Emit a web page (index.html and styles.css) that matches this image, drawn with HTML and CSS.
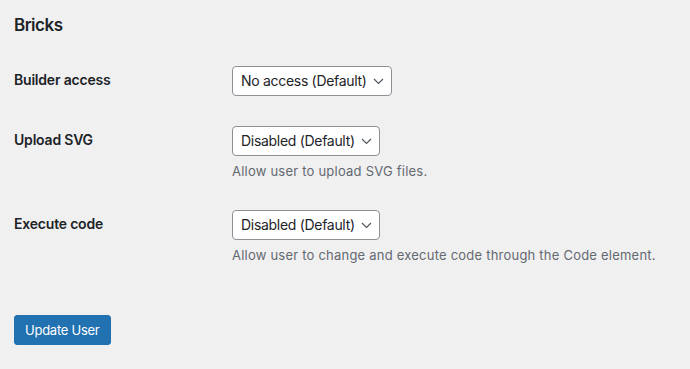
FILE: index.html
```html
<!DOCTYPE html>
<html lang="en">
<head>
  <meta charset="UTF-8" />
  <title>Edit User - Bricks</title>
  <link rel="stylesheet" href="styles.css">
</head>
<body>
  <h2>Bricks</h2>

  <form id="bricksForm">
    <div class="form-row">
      <label for="builderAccess">Builder access</label>
      <div class="field">
        <span class="select-wrap">
          <select id="builderAccess">
            <option>No access (Default)</option>
          </select>
          <svg class="chevron" width="11" height="7" viewBox="0 0 11 7"><path d="M1 1 L5.5 5.5 L10 1" fill="none" stroke="#50575e" stroke-width="1.2"/></svg>
        </span>
      </div>
    </div>

    <div class="form-row">
      <label for="uploadSvg">Upload SVG</label>
      <div class="field">
        <span class="select-wrap">
          <select id="uploadSvg">
            <option>Disabled (Default)</option>
          </select>
          <svg class="chevron" width="11" height="7" viewBox="0 0 11 7"><path d="M1 1 L5.5 5.5 L10 1" fill="none" stroke="#50575e" stroke-width="1.2"/></svg>
        </span>
        <p class="description">Allow user to upload SVG files.</p>
      </div>
    </div>

    <div class="form-row">
      <label for="executeCode">Execute code</label>
      <div class="field">
        <span class="select-wrap">
          <select id="executeCode">
            <option>Disabled (Default)</option>
          </select>
          <svg class="chevron" width="11" height="7" viewBox="0 0 11 7"><path d="M1 1 L5.5 5.5 L10 1" fill="none" stroke="#50575e" stroke-width="1.2"/></svg>
        </span>
        <p class="description">Allow user to change and execute code through the Code element.</p>
      </div>
    </div>

    <button type="submit" class="button-primary">Update User</button>
  </form>
</body>
</html>
```

FILE: styles.css
```css
body {
  font-family: Inter, 'Noto Sans', sans-serif;
  background-color: #f0f0f1;
  color: #1d2327;
  margin: 0;
  padding: 14px 14px 0;
  font-size: 13px;
}

h2 {
  font-size: 17px;
  font-weight: 600;
  line-height: 1.4;
  letter-spacing: -0.5px;
  margin: 0 0 13px;
}

.form-row {
  display: grid;
  grid-template-columns: 218px 1fr;
  align-items: start;
  padding: 15px 0;
}

.form-row label {
  font-size: 14px;
  font-weight: 600;
  line-height: 1.3;
  letter-spacing: -0.2px;
  margin-top: 5px;
}

.select-wrap {
  position: relative;
  display: inline-block;
}

select {
  appearance: none;
  -webkit-appearance: none;
  font-family: inherit;
  font-size: 14px;
  letter-spacing: -0.3px;
  color: #1d2327;
  background-color: #fff;
  border: 1px solid #8c8f94;
  border-radius: 4px;
  height: 30px;
  padding: 0 24px 0 8px;
  margin: 0;
  display: block;
}

.chevron {
  position: absolute;
  right: 8px;
  top: 12px;
  pointer-events: none;
}

.description {
  margin: 6px 0 0;
  color: #646970;
  font-size: 13px;
  line-height: 18px;
  letter-spacing: 0.22px;
}

.button-primary {
  display: block;
  margin-top: 36px;
  background-color: #2271b1;
  border: 1px solid #2271b1;
  border-radius: 3px;
  color: #fff;
  font-family: inherit;
  font-size: 13px;
  letter-spacing: -0.25px;
  height: 30px;
  padding: 0 10px;
  cursor: pointer;
}

.button-primary:hover {
  background-color: #135e96;
}
```
